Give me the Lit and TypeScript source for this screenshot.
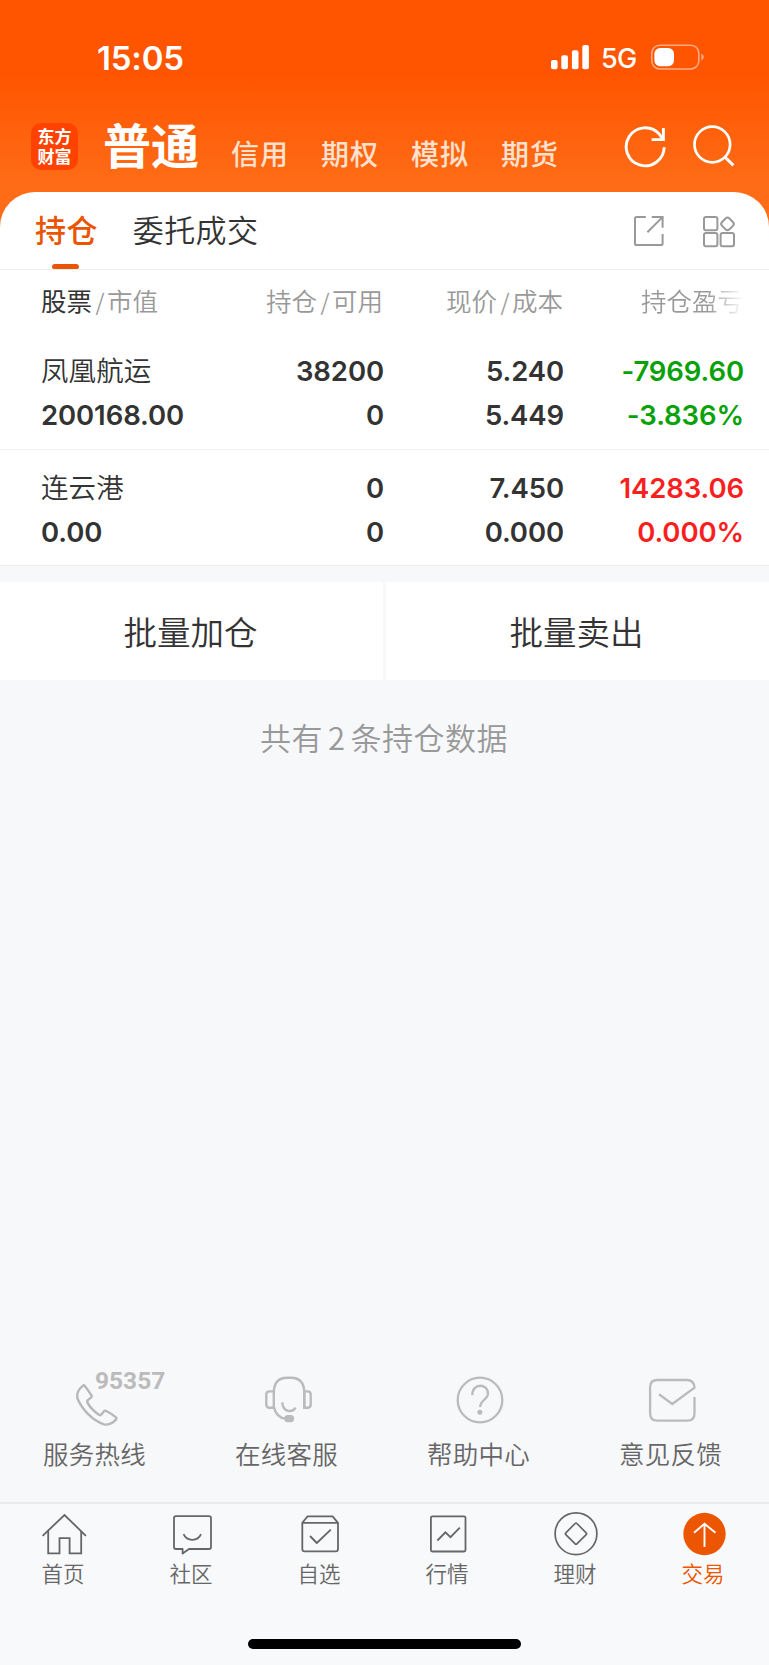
import { LitElement, html, css, svg, nothing } from "lit";
import { customElement } from "lit/decorators.js";

const FONT = css`"Inter", "Noto Sans CJK SC", sans-serif`;
const CJK = css`"Noto Sans CJK SC", "Noto Sans", sans-serif`;

/* Each icon is [viewBox x, y, width, height, shapes]. */
type Icon = [number, number, number, number, unknown];

const ICONS: Record<string, Icon> = {
  signal: [551, 44, 39, 26, svg`<g fill="#fff">
    <rect x="551" y="60" width="6.6" height="9.3" rx="2"/><rect x="561.3" y="55.3" width="6.6" height="14" rx="2"/>
    <rect x="571.9" y="50.2" width="6.6" height="19.1" rx="2"/><rect x="582.3" y="45" width="6.6" height="24.3" rx="2"/></g>`],
  battery: [650, 43, 56, 28, svg`
    <rect x="651.8" y="45.2" width="47" height="23.8" rx="8" fill="none" stroke="#ffab82" stroke-width="1.6"/>
    <rect x="654.4" y="48" width="19.6" height="18.2" rx="5.6" fill="#fff"/>
    <path d="M701.3 53.6Q703.8 54.6 703.8 57.1T701.3 60.6Z" fill="#ffab82"/>`],
  refresh: [624, 124, 44, 46, svg`<g fill="none" stroke="#fff" stroke-width="2.9">
    <path d="M664.2 147.2A19 19 0 1 1 659.6 134.4L662 138"/><path d="M663.4 128V139.6H651.6"/></g>`],
  search: [692, 124, 46, 46, svg`<g fill="none" stroke="#fff" stroke-width="2.7">
    <circle cx="712.3" cy="144.5" r="17.8"/><path d="M724.6 156.8L733.4 165.4" stroke-width="3"/></g>`],
  share: [633, 214, 32, 34, svg`<g fill="none" stroke="#999" stroke-width="2">
    <path d="M645.8 217H636.6Q635 217 635 218.6V243.4Q635 245 636.6 245H661Q662.6 245 662.6 243.4V234"/>
    <path d="M651.8 217H662.6V227.8"/><path d="M662 217.6L647.4 232.2"/></g>`],
  grid: [702, 214, 35, 34, svg`<g fill="none" stroke="#999" stroke-width="2">
    <rect x="704" y="217" width="13.4" height="13.2" rx="2"/><rect x="704" y="233" width="13.4" height="13.2" rx="2"/>
    <rect x="720.6" y="233" width="13.4" height="13.2" rx="2"/>
    <rect x="722.3" y="218.7" width="10.4" height="10.4" rx="2.8" transform="rotate(45 727.5 223.9)"/></g>`],
  phone: [74, 1370, 94, 60, svg`
    <path d="M83.3 1385.4Q84 1385 84.8 1385.9Q88.6 1390.6 91.6 1395.7Q92 1396.6 91.2 1397.4L87.6 1400.4Q86.8 1401.3 87.3 1402.4C90 1407.5 94.7 1412 99.3 1415Q100.3 1415.5 101.1 1414.7L104 1411.2Q104.8 1410.4 105.8 1410.8Q111 1413.4 116 1417.4Q116.8 1418.3 116.2 1419.3C113.4 1423 107.8 1425.2 104 1424.4C92.5 1420.5 82 1409.5 77.6 1398.8C75.8 1393.4 79.4 1388 83.3 1385.4Z" fill="none" stroke="#b8b8b8" stroke-width="2.4" stroke-linejoin="round"/>`],
  headset: [263, 1374, 50, 52, svg`<g fill="none" stroke="#bbb" stroke-width="2.4">
    <path d="M273.8 1408.5V1393Q273.8 1377.7 287 1377.7H291Q304.3 1377.7 304.3 1393V1408.5"/>
    <path d="M273.8 1391.4H269.5Q266.3 1391.4 266.3 1394.6V1404.6Q266.3 1407.8 269.5 1407.8H273.8"/>
    <path d="M304.3 1391.4H307.5Q310.7 1391.4 310.7 1394.6V1404.6Q310.7 1407.8 307.5 1407.8H304.3Z"/>
    <path d="M273.9 1407C275.5 1415 280 1418.2 286 1418.8"/><path d="M282.2 1402.3C283 1412.5 292.5 1413 295.6 1407.6"/></g>
    <rect x="284.3" y="1414.9" width="9.8" height="7.3" rx="3.5" fill="#bbb"/>`],
  help: [455, 1373, 50, 52, svg`<g fill="none" stroke="#bbb" stroke-width="2.3">
    <circle cx="480" cy="1399" r="22.3"/>
    <path d="M472.3 1394.2C472 1381.5 488.5 1382 488 1393.2C487.5 1399 480.3 1398.5 480.2 1406"/></g>
    <circle cx="479.9" cy="1411.2" r="2.5" fill="#bbb"/>`],
  mail: [647, 1374, 50, 50, svg`<g fill="none" stroke="#bbb" stroke-width="2.3">
    <path d="M694.5 1396V1412.5Q694.5 1419.7 687.3 1419.7H657.3Q650.1 1419.7 650.1 1412.5V1386.2Q650.1 1379 657.3 1379H687Q694 1379 694.5 1386.7L672.3 1403L659 1393.2"/></g>`],
  home: [40, 1510, 48, 46, svg`<g fill="none" stroke="#666" stroke-width="1.8">
    <path d="M42.6 1535.8L64.5 1515L85.9 1535.8"/>
    <path d="M48.2 1531V1553.3H59.5V1538.2H69.6V1553.3H81.2V1531"/></g>`],
  chat: [169, 1510, 46, 46, svg`<g fill="none" stroke="#666" stroke-width="1.8" stroke-linejoin="round">
    <path d="M176 1516.2H209Q211 1516.2 211 1518.2V1547Q211 1549 209 1549H189L182.6 1553.6V1549H176Q174 1549 174 1547V1518.2Q174 1516.2 176 1516.2Z"/>
    <path d="M183.6 1534.2Q186 1539.9 192.3 1539.9T201 1534.2"/></g>`],
  check: [298, 1510, 44, 46, svg`<g fill="none" stroke="#666" stroke-width="1.8" stroke-linejoin="round">
    <path d="M302.3 1522.8L307.6 1516.4H332.6L338 1522.8V1549Q338 1551.4 335.6 1551.4H304.7Q302.3 1551.4 302.3 1549Z"/>
    <path d="M302.3 1522.8H338"/><path d="M310 1536L316.8 1543L330.8 1529.7"/></g>`],
  chart: [427, 1510, 42, 46, svg`<g fill="none" stroke="#666" stroke-width="1.8">
    <rect x="430.9" y="1516.3" width="34.6" height="35.2" rx="1.5"/>
    <path d="M437.4 1540.5L445.4 1532.3L450.5 1537.2L459.8 1527.7"/></g>`],
  coin: [553, 1510, 46, 46, svg`<g fill="none" stroke="#666" stroke-width="1.7">
    <circle cx="576" cy="1533.7" r="20.9"/>
    <rect x="568.2" y="1525.9" width="15.6" height="15.6" rx="1.2" transform="rotate(45 576 1533.7)"/></g>`],
  trade: [681, 1510, 46, 46, svg`<circle cx="704.5" cy="1534" r="21.2" fill="#ec5600"/>
    <path d="M704.5 1547V1524M694 1532.7L704.5 1523.8L715.5 1532.7" fill="none" stroke="#fff" stroke-width="1.9"/>`],
};

function icon(name: string) {
  const [x, y, w, h, body] = ICONS[name];
  return html`<svg width=${w} height=${h} viewBox="${x} ${y} ${w} ${h}">${body}</svg>`;
}

const iconStyles = css`svg { display: block; flex: none; }`;

@customElement("status-bar")
class StatusBar extends LitElement {
  static styles = [iconStyles, css`
    :host { display: flex; height: 114px; box-sizing: border-box; padding: 36px 63px 36px 97px; align-items: center; color: #fff; font-family: ${FONT}; }
    .time { font-size: 33px; font-weight: 600; line-height: 42px; letter-spacing: -0.2px; margin-top: 2px; flex: 1; }
    .net { font-size: 27px; font-weight: 500; line-height: 42px; width: 37px; margin: 3px 12px 0 11px; letter-spacing: -0.8px; }
  `];
  render() {
    return html`<span class="time">15:05</span>${icon("signal")}<span class="net">5G</span>${icon("battery")}`;
  }
}

@customElement("account-bar")
class AccountBar extends LitElement {
  static styles = [iconStyles, css`
    :host { display: flex; height: 78px; padding: 0 31px 0 31px; color: #fff; font-family: ${CJK}; }
    .logo { box-sizing: border-box; width: 47px; height: 47px; margin-top: 9px; padding-top: 5px; border-radius: 10px; background: #ff4200; text-align: center; font-family: "Liberation Sans", "Noto Sans CJK SC", sans-serif; font-size: 17px; font-weight: 700; line-height: 20px; }
    .line { display: block; }
    .current { margin: 0 0 0 25px; font-size: 48px; font-weight: 700; line-height: 58px; width: 102px; }
    .accounts { display: flex; gap: 32px; margin-left: 26px; flex: 1; color: #ffe1cf; }
    .account { font-size: 28px; font-weight: 500; letter-spacing: 1px; line-height: 40px; padding-top: 19px; }
    .tools { display: flex; gap: 24px; margin-top: 10px; }
  `];
  render() {
    return html`
      <div class="logo"><span class="line">东方</span><span class="line">财富</span></div>
      <div class="current">普通</div>
      <div class="accounts">${["信用", "期权", "模拟", "期货"].map((t) => html`<span class="account">${t}</span>`)}</div>
      <div class="tools">${icon("refresh")}${icon("search")}</div>`;
  }
}

@customElement("holding-tabs")
class HoldingTabs extends LitElement {
  static styles = [iconStyles, css`
    :host { display: flex; height: 77px; border-bottom: 1px solid #eeeff0; padding: 0 32px 0 35px; font-family: ${CJK}; font-size: 31px; font-weight: 350; letter-spacing: 0.4px; color: #333; }
    .tab { display: flex; flex-direction: column; align-items: center; justify-content: space-between; line-height: 73px; height: 77px; margin-right: 35px; }
    .on { color: #ea5504; font-weight: 500; }
    .bar { width: 27px; height: 5px; border-radius: 3px 3px 2px 2px; background: #ea5504; margin-right: 2px; }
    .label { height: 72px; }
    .tools { display: flex; gap: 37px; margin: 22px 0 0 auto; }
  `];
  render() {
    return html`
      <div class="tab on"><span class="label">持仓</span><span class="bar"></span></div>
      <div class="tab"><span class="label">委托成交</span></div>
      <div class="tools">${icon("share")}${icon("grid")}</div>`;
  }
}

interface Holding { name: string; value: string; qty: string; free: string; price: string; cost: string; pl: string; rate: string; dir: string; }
const HOLDINGS: Holding[] = [
  { name: "凤凰航运", value: "200168.00", qty: "38200", free: "0", price: "5.240", cost: "5.449", pl: "-7969.60", rate: "-3.836%", dir: "down" },
  { name: "连云港", value: "0.00", qty: "0", free: "0", price: "7.450", cost: "0.000", pl: "14283.06", rate: "0.000%", dir: "up" },
];

@customElement("holding-table")
class HoldingTable extends LitElement {
  static styles = css`
    :host { display: block; height: 296px; font-family: ${FONT}; color: #333; }
    .row { display: grid; grid-template-columns: 201px 142px 180px 180px; padding: 0 25px 0 41px; text-align: right; }
    .row > :first-child { text-align: left; }
    .head { height: 64px; line-height: 60px; font-family: ${CJK}; font-size: 25.5px; color: #999; font-weight: 350; }
    .head > :not(:first-child) { padding-right: 1px; }
    .head b { color: #333; font-weight: 400; }
    .head i { font-style: normal; font-size: 23px; margin: 0 2.5px 0 3.5px; }
    .fade { background: linear-gradient(90deg, #999 65%, #fff 100%); background-clip: text; -webkit-background-clip: text; color: transparent; justify-self: end; }
    .item { height: 116px; box-sizing: border-box; padding-top: 15px; border-bottom: 1px solid #f0f0f2; }
    .item + .item { padding-top: 16px; border-bottom-color: #eeeff1; }
    .cell { display: flex; flex-direction: column; font-size: 27.5px; font-weight: 600; line-height: 44px; letter-spacing: -0.1px; }
    .cell .name { font-family: ${CJK}; font-size: 27.5px; font-weight: 350; line-height: 41px; padding-bottom: 3px; letter-spacing: 0.1px; }
    .down { color: #08a108; }
    .up { color: #fa1f1f; }
  `;
  render() {
    return html`
      <div class="row head">
        <span><b>股票</b><i>/</i>市值</span><span>持仓<i>/</i>可用</span><span>现价<i>/</i>成本</span><span class="fade">持仓盈亏</span>
      </div>
      ${HOLDINGS.map((h) => html`<div class="row item">
        <div class="cell"><span class="name">${h.name}</span><span>${h.value}</span></div>
        <div class="cell"><span>${h.qty}</span><span>${h.free}</span></div>
        <div class="cell"><span>${h.price}</span><span>${h.cost}</span></div>
        <div class="cell ${h.dir}"><span>${h.pl}</span><span>${h.rate}</span></div>
      </div>`)}`;
  }
}

@customElement("service-links")
class ServiceLinks extends LitElement {
  static styles = [iconStyles, css`
    :host { display: grid; grid-template-columns: repeat(4, 192px); height: 132px; font-family: ${CJK}; }
    .link { display: flex; flex-direction: column; align-items: center; }
    .pic { position: relative; height: 60px; display: flex; align-items: center; }
    .pic.wide { margin-left: 50px; }
    .hot { position: absolute; left: 21px; top: -1px; font: 700 24.5px/24px "Roboto", sans-serif; color: #bbb; }
    .label { font-size: 25.5px; font-weight: 350; letter-spacing: 0.2px; line-height: 42px; margin: 2px 3px 0 0; color: #666; }
  `];
  render() {
    const links = [["phone", "服务热线"], ["headset", "在线客服"], ["help", "帮助中心"], ["mail", "意见反馈"]];
    return html`${links.map(([ic, label]) => html`<div class="link">
      <div class="pic ${ic === "phone" ? "wide" : ""}">${icon(ic)}${ic === "phone" ? html`<span class="hot">95357</span>` : nothing}</div>
      <span class="label">${label}</span></div>`)}`;
  }
}

@customElement("bottom-nav")
class BottomNav extends LitElement {
  static styles = [iconStyles, css`
    :host { display: block; height: 163px; box-sizing: border-box; border-top: 2px solid #eaebed; background: #f8f9fb; font-family: ${CJK}; }
    .items { display: grid; grid-template-columns: repeat(6, 128px); height: 135px; }
    .item { display: flex; flex-direction: column; align-items: center; padding-top: 6px; color: #666; }
    .on { color: #ec5600; }
    .label { font-size: 21.5px; font-weight: 350; line-height: 34px; margin: 0 2px 0 0; }
    .home { width: 273px; height: 10px; border-radius: 5px; background: #000; margin: 0 auto; }
  `];
  render() {
    const items = [["home", "首页"], ["chat", "社区"], ["check", "自选"], ["chart", "行情"], ["coin", "理财"], ["trade", "交易"]];
    return html`<div class="items">${items.map(([ic, label]) => html`<div class="item ${ic === "trade" ? "on" : ""}">
      ${icon(ic)}<span class="label">${label}</span></div>`)}</div>
      <div class="home"></div>`;
  }
}

@customElement("app-root")
class AppRoot extends LitElement {
  static styles = css`
    :host { display: flex; flex-direction: column; width: 769px; height: 1665px; overflow: hidden; background: #f7f8fa; font-family: ${CJK}; }
    .top { background: linear-gradient(180deg, #ff5500 0, #ff5500 75px, #ff6c17 185px, #ff6c17 100%); }
    .card { background: #fff; border-radius: 35px 35px 0 0; }
    .actions { display: grid; grid-template-columns: 383px 383px; gap: 3px; height: 98px; margin-top: 16px; }
    .action { background: #fff; color: #333; font-size: 33.5px; font-weight: 350; line-height: 97px; text-align: center; padding-right: 2px; }
    .count { margin-top: 34px; line-height: 46px; text-align: center; color: #999; font-size: 31px; font-weight: 350; letter-spacing: 0.5px; flex: 1; padding-right: 1px; }
    .num { margin: 0 5px; }
  `;
  render() {
    return html`
      <div class="top"><status-bar></status-bar><account-bar></account-bar>
        <div class="card"><holding-tabs></holding-tabs><holding-table></holding-table></div></div>
      <div class="actions"><div class="action">批量加仓</div><div class="action">批量卖出</div></div>
      <div class="count">共有<span class="num">2</span>条持仓数据</div>
      <service-links></service-links>
      <bottom-nav></bottom-nav>`;
  }
}
